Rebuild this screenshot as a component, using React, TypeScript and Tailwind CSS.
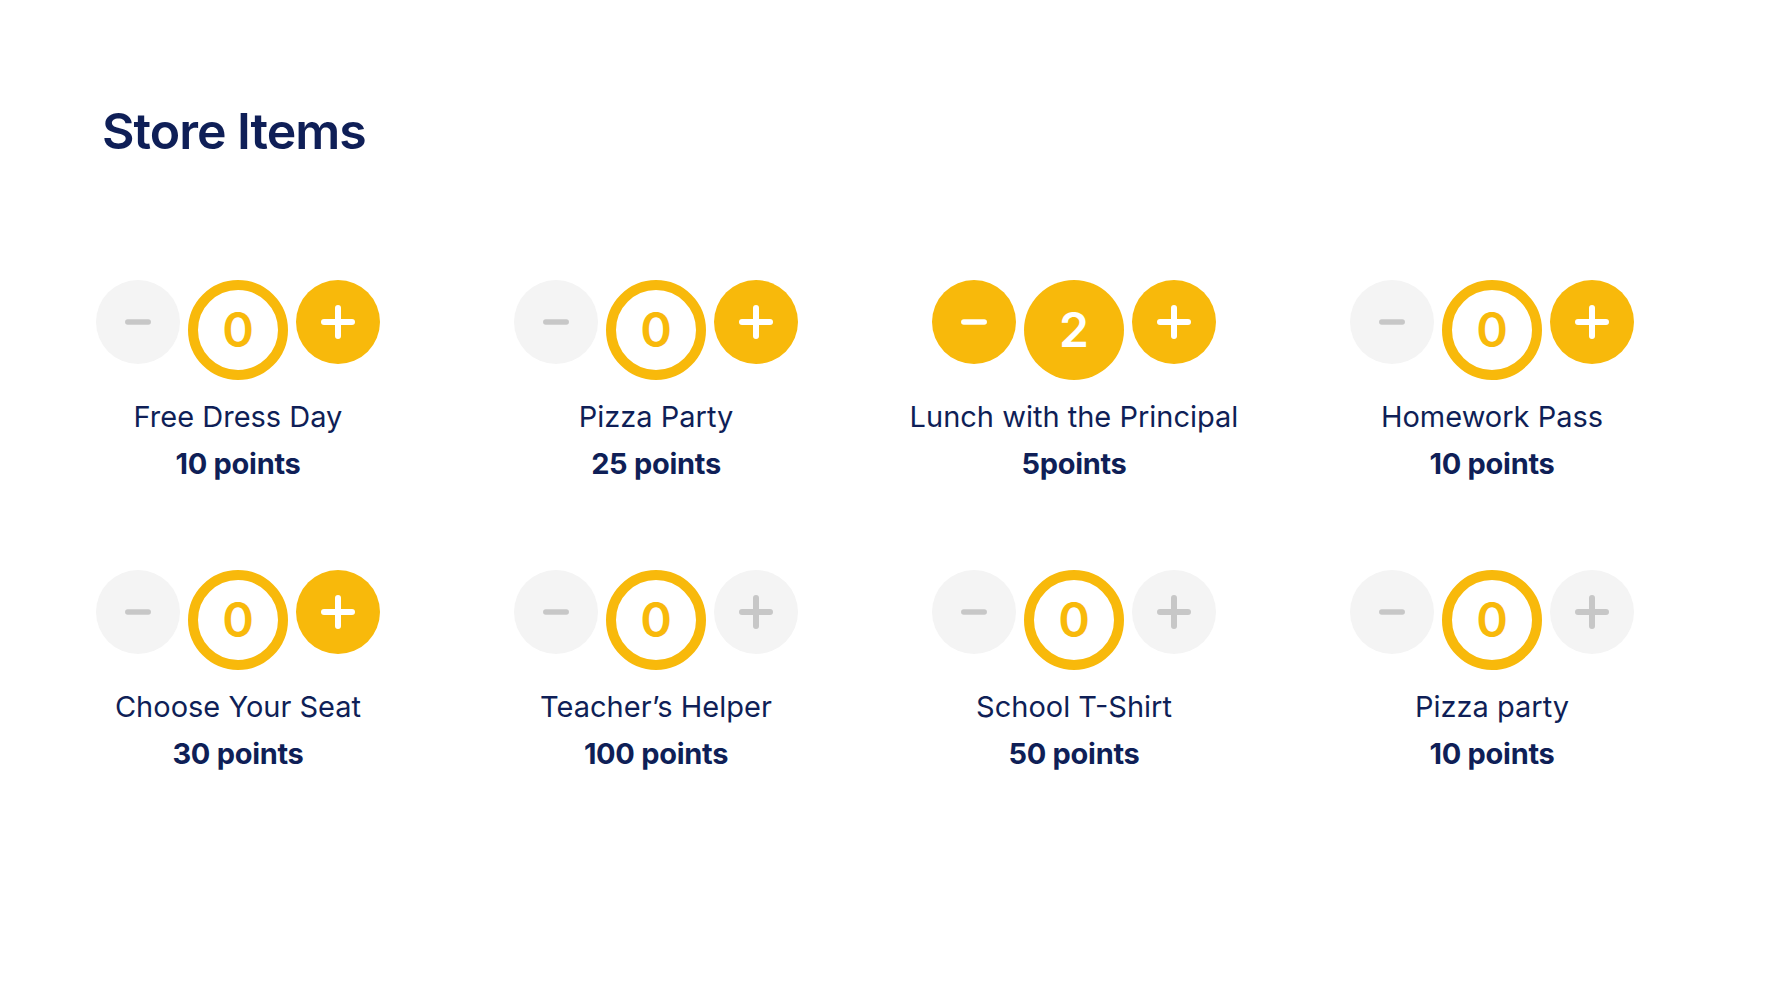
import React from "react";

type Item = { name: string; points: string; count: number; canMinus: boolean; canPlus: boolean };

const items: Item[] = [
  { name: "Free Dress Day", points: "10 points", count: 0, canMinus: false, canPlus: true },
  { name: "Pizza Party", points: "25 points", count: 0, canMinus: false, canPlus: true },
  { name: "Lunch with the Principal", points: "5points", count: 2, canMinus: true, canPlus: true },
  { name: "Homework Pass", points: "10 points", count: 0, canMinus: false, canPlus: true },
  { name: "Choose Your Seat", points: "30 points", count: 0, canMinus: false, canPlus: true },
  { name: "Teacher\u2019s Helper", points: "100 points", count: 0, canMinus: false, canPlus: false },
  { name: "School T-Shirt", points: "50 points", count: 0, canMinus: false, canPlus: false },
  { name: "Pizza party", points: "10 points", count: 0, canMinus: false, canPlus: false },
];

function MinusIcon({ color }: { color: string }) {
  return (
    <svg width="26" height="6" viewBox="0 0 26 6">
      <line x1="2.8" y1="3" x2="23.2" y2="3" stroke={color} strokeWidth="5.5" strokeLinecap="round" />
    </svg>
  );
}

function PlusIcon({ color }: { color: string }) {
  return (
    <svg width="34" height="34" viewBox="0 0 34 34">
      <line x1="3" y1="17" x2="31" y2="17" stroke={color} strokeWidth="6" strokeLinecap="round" />
      <line x1="17" y1="3" x2="17" y2="31" stroke={color} strokeWidth="6" strokeLinecap="round" />
    </svg>
  );
}

function StoreItem({ item }: { item: Item }) {
  const filled = item.count > 0;
  return (
    <div className="flex flex-col items-center">
      <div className="flex items-start gap-2">
        <div
          className={
            item.canMinus
              ? "flex h-[84px] w-[84px] items-center justify-center rounded-full bg-[#f8b90b]"
              : "flex h-[84px] w-[84px] items-center justify-center rounded-full bg-[#f4f4f4]"
          }
        >
          <MinusIcon color={item.canMinus ? "#ffffff" : "#c7c7c7"} />
        </div>
        <div
          className={
            filled
              ? "flex h-[100px] w-[100px] items-center justify-center rounded-full bg-[#f8b90b] text-[48px] font-semibold leading-none text-white"
              : "flex h-[100px] w-[100px] items-center justify-center rounded-full border-[10px] border-[#f8b90b] bg-white text-[48px] font-semibold leading-none text-[#f8b90b]"
          }
        >
          {item.count}
        </div>
        <div
          className={
            item.canPlus
              ? "flex h-[84px] w-[84px] items-center justify-center rounded-full bg-[#f8b90b]"
              : "flex h-[84px] w-[84px] items-center justify-center rounded-full bg-[#f4f4f4]"
          }
        >
          <PlusIcon color={item.canPlus ? "#ffffff" : "#c7c7c7"} />
        </div>
      </div>
      <div className="mt-[13px] whitespace-nowrap text-[29px] leading-[47px] tracking-[0em] text-[#0f1f57]">
        {item.name}
      </div>
      <div className="whitespace-nowrap text-[29px] font-bold leading-[47px] tracking-[-0.01em] text-[#0f1f57]">
        {item.points}
      </div>
    </div>
  );
}

export default function App() {
  return (
    <div
      className="min-h-[990px] w-full bg-white pl-[29px] pt-[106px]"
      style={{ fontFamily: "Inter, 'Noto Sans', sans-serif" }}
    >
      <h1 className="ml-[73px] text-[50px] font-semibold leading-[50px] tracking-[-0.02em] text-[#0f1f57]">
        Store Items
      </h1>
      <div className="mt-[124px] grid grid-cols-[repeat(4,418px)] gap-y-[83px]">
        {items.map((it, i) => (
          <StoreItem key={i} item={it} />
        ))}
      </div>
    </div>
  );
}
